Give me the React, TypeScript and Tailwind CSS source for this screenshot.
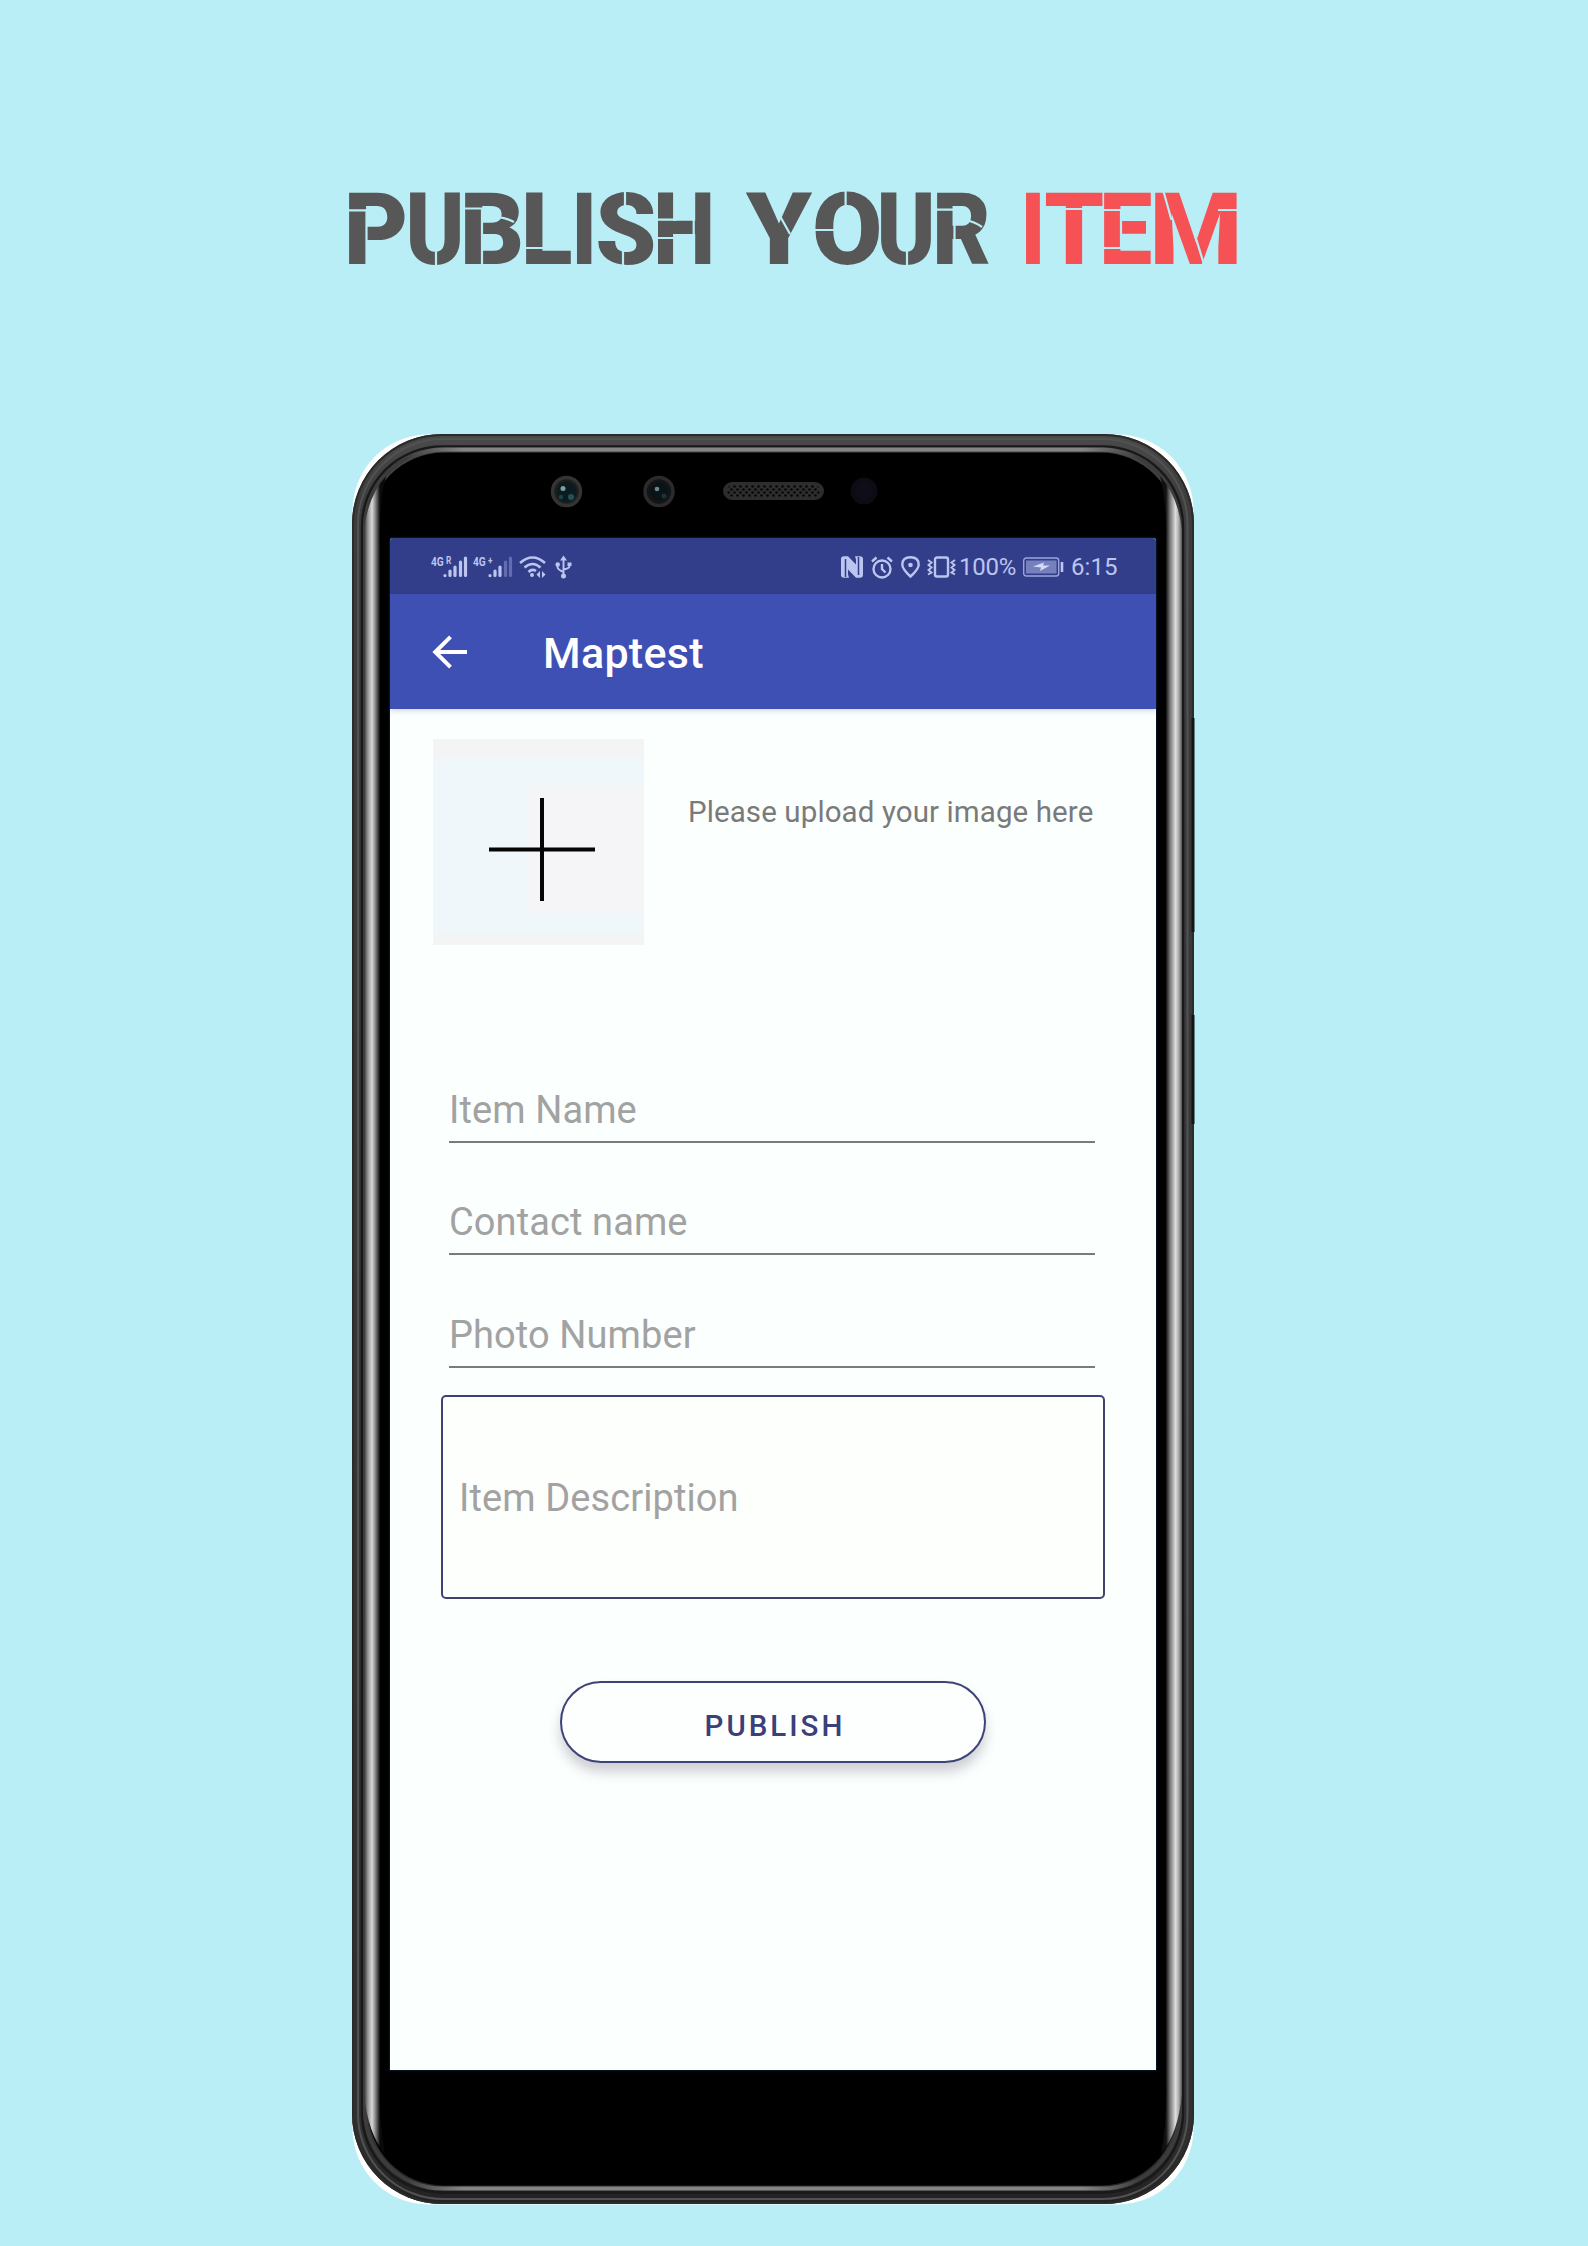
import React from "react";

type Glyph = [char: string, width: number, scale: number, bearing: number];

// Each glyph: character, distance to the next one, horizontal scale, left bearing in px.
const PUBLISH: Glyph[] = [
  ["P", 61, 0.98, 4.3],
  ["U", 55, 0.88, 3.9],
  ["B", 61, 0.99, 4.3],
  ["L", 51, 0.94, 4.3],
  ["I", 21, 0.83, 5.3],
  ["S", 60, 0.97, 1.9],
  ["H", 89, 0.87, 4.3],
];
const YOUR: Glyph[] = [
  ["Y", 69, 1.04, 0],
  ["O", 65, 1.01, 3],
  ["U", 56, 0.88, 3.9],
  ["R", 89, 0.89, 4.3],
];
const ITEM: Glyph[] = [
  ["I", 21, 0.8, 5.3],
  ["T", 57, 0.94, 1.8],
  ["E", 51, 0.94, 4.3],
  ["M", 84, 1.05, 4.3],
];

function TitleWord({ glyphs, className }: { glyphs: Glyph[]; className?: string }) {
  return (
    <span className={`block whitespace-nowrap ${className ?? ""}`}>
      {glyphs.map(([char, width, scale, bearing], i) => (
        <span
          key={i}
          className="inline-block origin-left"
          style={{ width, transform: `translateX(${-bearing * scale}px) scaleX(${scale})` }}
        >
          {char}
        </span>
      ))}
    </span>
  );
}

function StencilCuts() {
  return (
    <svg className="absolute left-0 top-0" width="1588" height="300" viewBox="0 0 1588 300" fill="none" stroke="#b9eef6" strokeWidth="2.2">
      <path d="M346 210.300H367.500M366.500 209V267M436 246V267M462 208.500H483M482 208V267M497 217Q507 218 514 222M523 248H546M625 191V209M623 248V267M655 219.700H677M655 238H677M693.700 219V239" />
      <path d="M780 216L790 234M845.600 191V211M813 230H834M907 246V267M934 209.700H955M954.500 209V267M966 220Q975 222 982 227" />
      <path d="M1062 209H1086M1101 210H1122M1101 248H1122M1121 210V249M1163.400 191L1171.500 220M1194 232L1204.500 266M1218 210H1239" />
    </svg>
  );
}

function PhoneFrame() {
  return (
    <svg className="absolute left-0 top-0" width="844" height="1772" viewBox="0 0 844 1772" fill="none">
      <defs>
        <linearGradient id="silverL" x1="12" x2="28" y1="0" y2="0" gradientUnits="userSpaceOnUse">
          <stop offset="0" stopColor="#333" />
          <stop offset="0.25" stopColor="#999" />
          <stop offset="0.5" stopColor="#d8d8d8" />
          <stop offset="0.75" stopColor="#777" />
          <stop offset="1" stopColor="#0a0a0a" />
        </linearGradient>
        <linearGradient id="silverR" x1="814" x2="830" y1="0" y2="0" gradientUnits="userSpaceOnUse">
          <stop offset="0" stopColor="#111" />
          <stop offset="0.25" stopColor="#777" />
          <stop offset="0.6" stopColor="#dedede" />
          <stop offset="0.8" stopColor="#aaa" />
          <stop offset="1" stopColor="#555" />
        </linearGradient>
        <linearGradient id="rim" x1="0" x2="0" y1="0" y2="1">
          <stop offset="0" stopColor="#4a4a4a" />
          <stop offset="0.04" stopColor="#3c3c3c" />
          <stop offset="0.96" stopColor="#303030" />
          <stop offset="1" stopColor="#222" />
        </linearGradient>
        <linearGradient id="edge" x1="13" x2="828" y1="0" y2="0" gradientUnits="userSpaceOnUse">
          <stop offset="0" stopColor="#3c3c3c" />
          <stop offset="0.05" stopColor="#3c3c3c" />
          <stop offset="0.12" stopColor="#858585" />
          <stop offset="0.88" stopColor="#858585" />
          <stop offset="0.95" stopColor="#3c3c3c" />
          <stop offset="1" stopColor="#3c3c3c" />
        </linearGradient>
        <pattern id="mesh" width="6" height="6" patternUnits="userSpaceOnUse">
          <circle cx="1.5" cy="1.5" r="1.3" fill="#050505" />
          <circle cx="4.5" cy="4.5" r="1.3" fill="#050505" />
        </pattern>
      </defs>
      <rect x="0.5" y="0.5" width="841" height="1770" rx="76" fill="#fff" />
      <rect x="0" y="0" width="842" height="1770" rx="90" fill="url(#rim)" />
      <rect x="1" y="1" width="840" height="1768" rx="89" stroke="#2b2b2b" strokeWidth="2" />
      <rect x="6" y="5" width="829.5" height="1760" rx="85" stroke="#525252" strokeWidth="2" />
      <rect x="10" y="12.5" width="821" height="1746" rx="80" stroke="#191919" strokeWidth="2.500" />
      <rect x="13" y="15.5" width="815" height="1739" rx="78" stroke="url(#edge)" strokeWidth="4" />
      <rect x="16" y="18.5" width="809" height="1733" rx="76" fill="#000" />
      <path d="M12 96 Q16 62 34 42 Q27 66 28 110 V1650 Q27 1690 33 1720 Q16 1700 12 1660Z" fill="url(#silverL)" />
      <path d="M830 96 Q826 62 808 42 Q815 66 814 110 V1650 Q815 1690 809 1720 Q826 1700 830 1660Z" fill="url(#silverR)" />
      <path d="M841 284V498M841 581V690" stroke="#151515" strokeWidth="3" />
      <g>
        <circle cx="214.500" cy="57.500" r="14" fill="#1d1f1f" stroke="#343434" strokeWidth="3.500" />
        <circle cx="214.500" cy="57.500" r="10" fill="#0b1c20" />
        <circle cx="211" cy="54.500" r="2.500" fill="#7f9ea3" />
        <circle cx="219" cy="63" r="3" fill="#24525a" />
        <circle cx="209" cy="63" r="2.200" fill="#1f4249" />
        <circle cx="307" cy="57.500" r="14" fill="#141516" stroke="#2b2b2b" strokeWidth="3.500" />
        <circle cx="307" cy="57.500" r="9" fill="#0a1317" />
        <circle cx="305" cy="55" r="2.300" fill="#70868b" />
        <circle cx="312" cy="62" r="2.500" fill="#1b3238" />
        <rect x="372.500" y="49.500" width="98" height="15" rx="7.500" fill="#2e2e2e" stroke="#2d2d2d" strokeWidth="3" />
        <rect x="375" y="51" width="93" height="12" rx="6" fill="url(#mesh)" />
        <circle cx="512" cy="57" r="13.500" fill="#0d0b13" />
        <circle cx="512" cy="57" r="9" fill="#100d19" />
      </g>
    </svg>
  );
}

function Signal({ label, sup, dim }: { label: string; sup: string; dim: boolean }) {
  return (
    <div className="relative h-[24px] w-[39px]">
      <span className="absolute left-0 top-0 origin-left scale-x-[0.78] whitespace-nowrap text-[13px] font-bold leading-[13px]">{label}</span>
      <span className="absolute left-[15px] top-0 origin-left scale-x-[0.75] text-[11px] font-bold leading-[11px]">{sup}</span>
      <svg className={`absolute top-[1px] ${dim ? "left-[15px]" : "left-[12px]"}`} width="25" height="22" viewBox="0 0 25 22" stroke="#bcc4f0" strokeWidth="3.200" strokeLinecap="round">
        <path d="M2 19.500V19.600M7 15V19.500M12 11V19.500" />
        <path d="M17.500 6V19.500M22.500 2V19.500" opacity={dim ? 0.35 : 1} />
      </svg>
    </div>
  );
}

function StatusBar() {
  return (
    <div className="flex h-[56px] items-center bg-[#333e8a] pt-[2px] text-[#bcc4f0]">
      <div className="ml-[41px] flex items-center">
        <div className="mr-[3px]"><Signal label="4G" sup="R" dim={false} /></div>
        <Signal label="4G" sup="+" dim />
        <svg className="ml-[7px]" width="27" height="24" viewBox="0 0 27 24" fill="none" stroke="#bcc4f0" strokeWidth="2.600">
          <path d="M1 8Q13.500 -3 26 8M5.500 12.500Q13.500 5.500 21.500 12.500M9.500 17Q13 13.500 17 16" />
          <circle cx="13" cy="20" r="2" fill="#bcc4f0" stroke="none" />
          <path d="M21 16V23L17.500 19.500ZM23 16V23L26.500 19.500Z" fill="#bcc4f0" stroke="none" />
        </svg>
        <svg className="ml-[9px]" width="17" height="24" viewBox="0 0 17 24" fill="none" stroke="#bcc4f0" strokeWidth="1.900">
          <path d="M8.500 4V21M2.500 9V12Q2.500 14.500 8.500 17M14.500 9V11Q14.500 13.500 8.500 14.500" />
          <path d="M8.500 0.500L12 5.500H5ZM12.500 7.500H16.500V11H12.500Z" fill="#bcc4f0" stroke="none" />
          <circle cx="2.700" cy="9.500" r="2.300" fill="#bcc4f0" stroke="none" />
          <circle cx="8.500" cy="21" r="2.500" fill="#bcc4f0" stroke="none" />
        </svg>
      </div>
      <div className="ml-auto mr-[38px] flex items-center">
        <svg className="mr-[8px]" width="22" height="22" viewBox="0 0 22 22" fill="none">
          <path d="M3 0.300H7L15 8.500V3.500L14 0.300H19Q22 0.500 22 3V19Q22 21.500 19 21.700H15L7 13.500V18.500L8 21.700H3Q0 21.500 0 19V3Q0 0.500 3 0.300Z" fill="#bcc4f0" />
          <path d="M4.500 21V3M17.500 19V1" stroke="#333e8a" strokeWidth="1.500" />
        </svg>
        <svg className="mr-[8px]" width="22" height="23" viewBox="0 0 22 23" fill="none" stroke="#bcc4f0" strokeWidth="2.400">
          <circle cx="11" cy="13" r="8.500" />
          <path d="M11 8V13L14.500 16.500M1 5.500L5.500 1.500M21 5.500L16.500 1.500" />
        </svg>
        <svg className="mr-[7px]" width="19" height="22" viewBox="0 0 19 22" fill="none" stroke="#bcc4f0" strokeWidth="2.400">
          <path d="M9.500 20.500Q1.300 13 1.300 8.700Q1.300 1.300 9.500 1.300T17.700 8.700Q17.700 13 9.500 20.500Z" />
          <circle cx="9.500" cy="9" r="2.300" fill="#bcc4f0" stroke="none" />
        </svg>
        <svg className="mr-[3px]" width="29" height="22" viewBox="0 0 29 22" fill="none" stroke="#bcc4f0">
          <rect x="8" y="1.500" width="13" height="19" rx="2" strokeWidth="2.400" />
          <path d="M1 4L4.500 6.500L1.500 9L4.500 11.500L1.500 14L4.500 16.500L1 18.500M28 4L24.500 6.500L27.500 9L24.500 11.500L27.500 14L24.500 16.500L28 18.500" strokeWidth="1.900" />
        </svg>
        <span className="mr-[7px] w-[57px] whitespace-nowrap text-[24px] leading-[28px] tracking-[-0.2px]">100%</span>
        <svg className="mr-[7px]" width="41" height="20" viewBox="0 0 41 20" fill="none">
          <rect x="0.700" y="1" width="35" height="18" rx="2.500" stroke="#9ba5dc" strokeWidth="1.400" />
          <rect x="3" y="3.500" width="30.500" height="13" fill="#7680bd" />
          <path d="M10 9.500L21 5.500L20 8.500H27L17 14L18 10.500Z" fill="#d5daf8" />
          <path d="M39 5V15" stroke="#bcc4f0" strokeWidth="2.600" />
        </svg>
        <span className="w-[47px] whitespace-nowrap text-[24px] leading-[28px] tracking-[0.1px]">6:15</span>
      </div>
    </div>
  );
}

function Field({ label }: { label: string }) {
  return (
    <div className="ml-[59px] flex h-[112.5px] w-[646px] flex-col justify-end border-b-2 border-[#7b7b7b]">
      <span className="pb-[11px] text-[38px] leading-[40px] tracking-[0.1px] text-[#a2a2a2]">{label}</span>
    </div>
  );
}

export default function App() {
  return (
    <main className="relative h-[2246px] w-[1588px] overflow-hidden bg-[#b9eef6] font-['Roboto',sans-serif]">
      <h1 className="flex h-[434px] pl-[348px] pt-[171px] text-[101px] font-black leading-[118px] text-[#575757]">
        <TitleWord glyphs={PUBLISH} />
        <TitleWord glyphs={YOUR} />
        <TitleWord glyphs={ITEM} className="text-[#f65154]" />
      </h1>
      <StencilCuts />
      <section className="relative ml-[352px] h-[1772px] w-[844px] pl-[38px] pt-[104px]">
        <PhoneFrame />
        <div className="relative h-[1532px] w-[766px] overflow-hidden rounded-t-[3px] bg-[#fbfffe] shadow-[0_0_2px_#15508a]">
          <StatusBar />
          <header className="relative flex h-[115px] items-center bg-[#3f50b5] text-white shadow-[0_1px_6px_rgba(60,40,110,0.25)]">
            <svg className="ml-[42px]" width="36" height="34" viewBox="0 0 36 34" fill="none" stroke="#fff" strokeWidth="4">
              <path d="M35 17H3M18.500 1.800L3.200 17L18.500 32.200" />
            </svg>
            <span className="ml-[75px] pt-[2px] text-[43px] font-medium leading-[48px] tracking-[0.3px]">Maptest</span>
          </header>
          <div className="flex flex-col">
            <div className="mt-[30px] flex h-[206px]">
              <div className="ml-[43px] flex h-[206px] w-[211px] items-center justify-center border-b-[12px] border-t-[18px] border-[#f4f4f5] bg-[linear-gradient(#f5f5f7,#f5f5f7)] bg-[#f0f7fb] bg-[length:117px_129px] bg-[position:100%_60%] bg-no-repeat">
                <svg width="106" height="103" viewBox="0 0 106 103" className="relative left-[3px] top-[4px]" stroke="#050505" strokeWidth="4">
                  <path d="M53 0V103M0 51.500H106" />
                </svg>
              </div>
              <span className="ml-[44px] mt-[55px] whitespace-nowrap text-[29.5px] leading-[36px] tracking-[0.1px] text-[#7a7a7a]">Please upload your image here</span>
            </div>
            <div className="mt-[85px] flex flex-col">
              <Field label="Item Name" />
              <Field label="Contact name" />
              <Field label="Photo Number" />
            </div>
            <div className="ml-[51px] mt-[27px] flex h-[204px] w-[664px] items-center rounded-[5px] border-2 border-[#3f4270] bg-[#fdfffd] pl-[16px]">
              <span className="pt-[2px] text-[38px] leading-[42px] tracking-[0.1px] text-[#a2a2a2]">Item Description</span>
            </div>
            <button className="ml-[170px] mt-[82px] flex h-[82px] w-[426px] items-center justify-center rounded-[41px] border-2 border-[#3d4377] bg-[#fdfffe] pl-[4px] pt-[9px] text-[29.5px] font-medium leading-[34px] tracking-[3px] text-[#3a4079] shadow-[0_9px_12px_rgba(80,65,90,0.25)]">
              PUBLISH
            </button>
          </div>
        </div>
      </section>
    </main>
  );
}
